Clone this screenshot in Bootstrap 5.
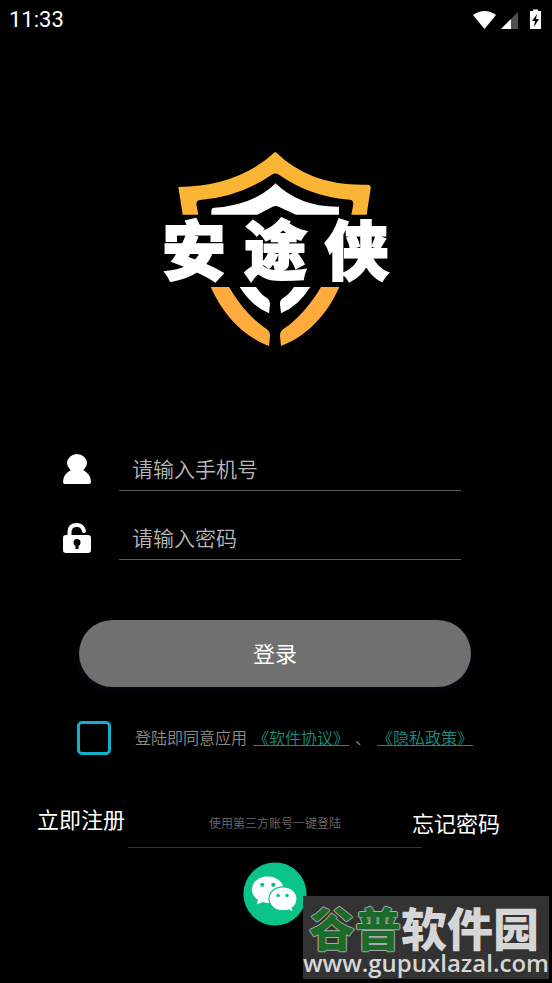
<!DOCTYPE html>
<html lang="zh-CN" data-bs-theme="dark">
<head>
<meta charset="utf-8">
<meta name="viewport" content="width=device-width, initial-scale=1">
<title>安途侠 登录</title>
<link rel="stylesheet" href="https://cdn.jsdelivr.net/npm/bootstrap@5.3.0/dist/css/bootstrap.min.css">
<style>
body { background: #000; color: #fff; font-family: Roboto, "Noto Sans CJK SC", sans-serif; font-size: 22px; }
.status-bar { height: 39px; padding: 0 10px 0 9px; line-height: 24px; }
main { padding-right: 2px; }
.brand { padding-top: 101px; }
.login-form { padding: 83px 79px 0; }
.field { padding-right: 10px; margin-left: -16px; }
.field + .field { margin-top: 21px; }
.field label { width: 28px; padding-top: 4px; line-height: 1; }
.field .form-control { height: 48px; margin-left: 28px; padding: 7px 13px 0 13px; line-height: 32px; font-size: 21px; background: transparent; border-bottom: 1px solid #5c5c5c !important; box-shadow: none; color: #fff; }
.field .form-control::placeholder { color: #b8b8b8; opacity: 1; font-weight: 350; }
.btn-login { height: 67px; margin-top: 60px; padding-top: 8px; background: #707070; color: #fff; font-size: 22px; box-shadow: 0 3px 6px #050b18; }
.btn-login:hover { background: #7c7c7c; color: #fff; }
.agree { margin: 34px -8px 0 -2px; font-size: 16px; font-weight: 350; color: #8c8c8c; white-space: nowrap; }
.agree .form-check-input { width: 34px; height: 34px; border: 3px solid #12b0cc; border-radius: 5px; background-color: transparent; }
.agree-text { padding-left: 24px; padding-top: 2px; gap: 6px; }
.agree a { color: #168f7e; }
.third { padding: 43px 50px 0 37px; }
.third a { line-height: 32px; }
.register { padding-top: 7px; }
.forgot { padding-top: 11px; }
.third-title { padding: 16px 0 13px; font-size: 12px; line-height: 20px; font-weight: 350; color: #6c6c6c; border-bottom: 1px solid #343434; margin: 0 -10px 0 3px; }
.wechat { margin-top: 14px; line-height: 1; }
.site-tag { right: 3px; bottom: 4px; height: 83px; background: #333; color: #d6d6d6; }
.site-name { font-family: "Noto Sans CJK SC", sans-serif; font-size: 46px; line-height: 48px; font-weight: 900; font-style: oblique 8deg; padding: 6px 4px 0 6px; }
.site-name b { font-weight: 900; color: #1b6b2c; text-shadow: 1px 0 #aaa, -1px 0 #aaa, 0 1px #aaa, 0 -1px #aaa; }
.site-url { font-family: "Open Sans", sans-serif; font-size: 24px; line-height: 26px; font-weight: 600; }
</style>
</head>
<body>
<div class="position-relative min-vh-100 overflow-hidden">
  <header class="status-bar d-flex align-items-center justify-content-between">
    <span>11:33</span>
    <svg width="72" height="22" viewBox="0 0 72 22" aria-hidden="true">
      <path d="M3 5Q14.500 -3 26 5L14.500 19Z" transform="translate(0 1)" fill="#fff"/>
      <path d="M48 3V20H31Z" fill="#505050"/><path d="M41 10V20H31Z" fill="#fff"/>
      <path d="M63 2V0.500H68V2H71V20H60V2Z" fill="#fff"/><path d="M67 5L62 12H65L64 18L69 10H66Z" fill="#000"/>
    </svg>
  </header>

  <main>
    <div class="brand text-center lh-1">
      <svg width="250" height="220" viewBox="0 0 750 660" role="img" aria-label="安途侠">
        <path fill="#fbb535" d="M376 35Q483 140 655 134Q664 136 662 145L650 224H604L610 193Q611 181 600 179Q481 170 387 104Q376 97 365 104Q271 170 150 180Q139 181 139 193L145 224H98L85 141Q265 139 376 35Z"/>
        <path fill="#fff" d="M377 130Q450 202 567 200V224H438L386 200Q377 196 368 200L322 224H184V212Q184 204 193 203Q306 198 377 130Z"/>
        <g id="lower">
          <path fill="#ffab3e" d="M182 441H237C268 493 305 538 350 567Q361 576 360 589L357 618C283 590 222 530 182 441Z"/>
          <path fill="#fff" d="M269 441H318Q333 464 352 475Q361 481 360 493L357 520Q306 499 269 441Z"/>
        </g>
        <use href="#lower" transform="translate(750 0) scale(-1 1)"/>
        <text x="132 376 620" y="402" text-anchor="middle" font-family="Noto Sans CJK SC, sans-serif" font-size="190" font-weight="900" fill="#fff" stroke="#fff" stroke-width="6">安途侠</text>
      </svg>
    </div>

    <form class="login-form">
      <div class="field d-flex align-items-center">
        <label for="phone"><svg width="28" height="30" viewBox="0 0 28 30" fill="#fff" role="img" aria-label="手机号"><ellipse cx="14" cy="9" rx="10" ry="9"/><path d="M8 16H20Q28 20 28 28Q28 30 26 30H2Q0 30 0 28Q0 20 8 16Z"/></svg></label>
        <input id="phone" type="tel" class="form-control border-0 rounded-0" placeholder="请输入手机号">
      </div>
      <div class="field d-flex align-items-center">
        <label for="pwd"><svg width="28" height="30" viewBox="0 0 28 30" role="img" aria-label="密码"><path d="M6.500 13V9Q6.500 2 14 2Q19.500 2 21 8" fill="none" stroke="#fff" stroke-width="4" stroke-linecap="round"/><rect y="12" width="28" height="18" rx="3" fill="#fff"/><circle cx="14" cy="19.500" r="3.500"/><path d="M12.500 19H15.500V26H12.500Z"/></svg></label>
        <input id="pwd" type="password" class="form-control border-0 rounded-0" placeholder="请输入密码">
      </div>
      <button type="submit" class="btn btn-login w-100 rounded-pill border-0">登录</button>
      <div class="agree d-flex align-items-center">
        <input id="agree" type="checkbox" class="form-check-input m-0 flex-shrink-0">
        <div class="agree-text d-flex"><label for="agree">登陆即同意应用</label><a href="#terms">《软件协议》</a><span>、</span><a href="#privacy">《隐私政策》</a></div>
      </div>
    </form>

    <section class="third d-flex align-items-start">
      <a href="#register" class="register text-white text-decoration-none">立即注册</a>
      <div class="third-title flex-fill text-center">使用第三方账号一键登陆</div>
      <a href="#forgot" class="forgot text-white text-decoration-none">忘记密码</a>
    </section>
    <div class="wechat text-center">
      <button type="button" class="btn p-0 border-0 lh-1" aria-label="微信登陆">
        <svg width="64" height="64" viewBox="0 0 80 80">
          <circle cx="40" cy="40" r="39.500" fill="#09c388"/>
          <path fill="#fff" d="M31 18C19 18 11 25.500 11 34.500C11 40 14 44.500 19 47.500L17 53L25 50Q29 51.500 34 51C45 51 51 43 51 34.500C51 25 42 18 31 18Z"/>
          <path fill="#fff" stroke="#09c388" stroke-width="1.500" d="M50 31C40 31 32.500 37.500 32.500 46C32.500 54.500 40 61 50 61Q54 61 57 60L63 63L61.500 57.500Q67.500 53 67.500 46C67.500 37.500 60 31 50 31Z"/>
          <g fill="#09c388"><circle cx="24" cy="28.500" r="2.700"/><circle cx="38" cy="28.500" r="2.700"/><circle cx="44" cy="42" r="2.200"/><circle cx="55" cy="42" r="2.200"/></g>
        </svg>
      </button>
    </div>
  </main>

  <aside class="site-tag position-absolute text-nowrap">
    <div class="site-name"><b>谷普</b>软件园</div>
    <div class="site-url">www.gupuxlazal.com</div>
  </aside>
</div>
<script src="https://cdn.jsdelivr.net/npm/bootstrap@5.3.0/dist/js/bootstrap.bundle.min.js"></script>
</body>
</html>
